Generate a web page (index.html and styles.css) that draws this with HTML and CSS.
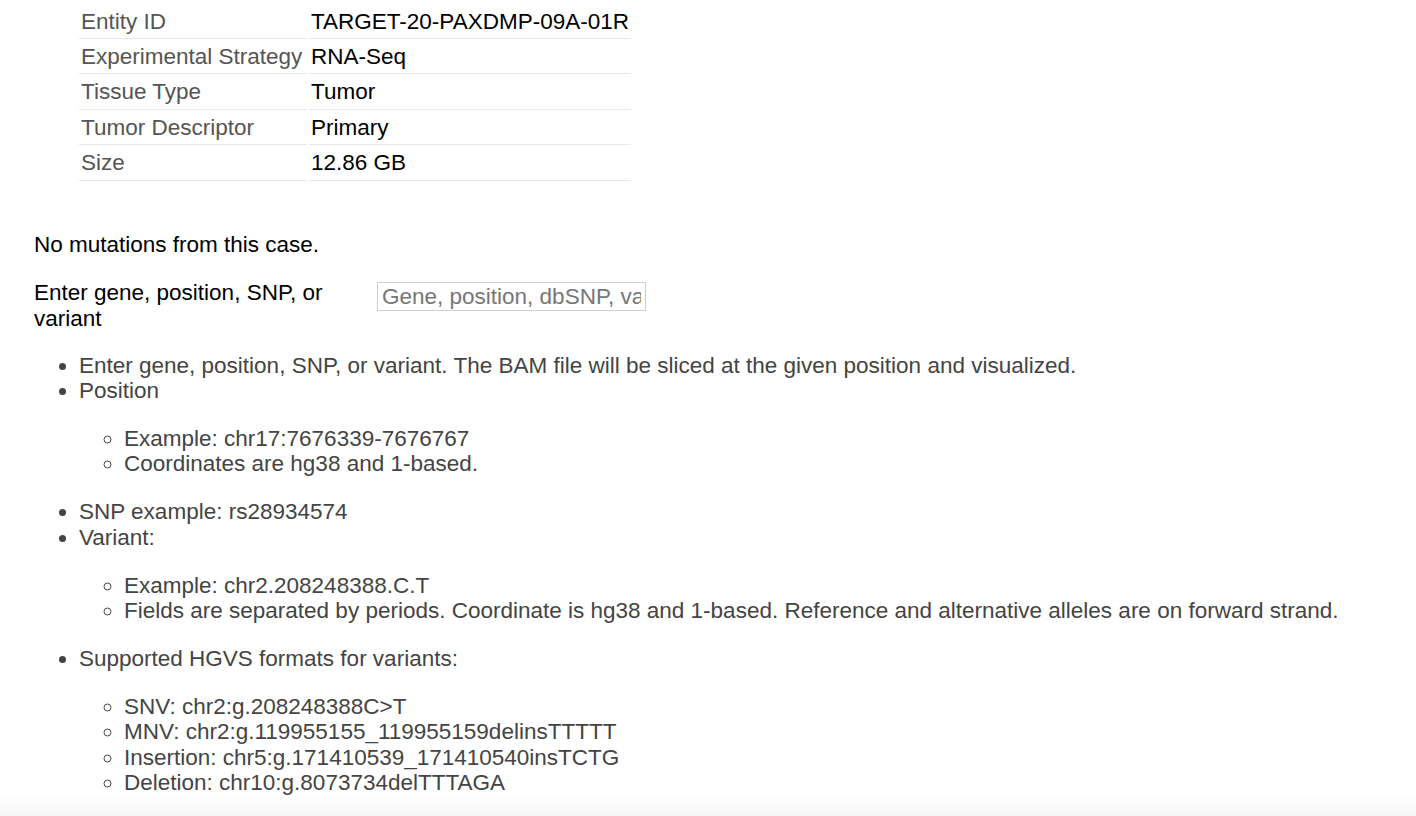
FILE: index.html
```html
<!DOCTYPE html>
<html>
<head>
<meta charset="utf-8">
<link rel="stylesheet" href="styles.css">
</head>
<body>
<div class="page">
  <table class="meta">
    <tr><td class="k">Entity ID</td><td class="v">TARGET-20-PAXDMP-09A-01R</td></tr>
    <tr><td class="k">Experimental Strategy</td><td class="v">RNA-Seq</td></tr>
    <tr><td class="k">Tissue Type</td><td class="v">Tumor</td></tr>
    <tr><td class="k">Tumor Descriptor</td><td class="v">Primary</td></tr>
    <tr><td class="k">Size</td><td class="v">12.86 GB</td></tr>
  </table>

  <p class="none">No mutations from this case.</p>

  <div class="search">
    <label class="search-label" for="q">Enter gene, position, SNP, or variant</label>
    <input id="q" class="search-input" type="text" placeholder="Gene, position, dbSNP, variant">
  </div>

  <ul class="help">
    <li>Enter gene, position, SNP, or variant. The BAM file will be sliced at the given position and visualized.</li>
    <li>Position
      <ul>
        <li>Example: chr17:7676339-7676767</li>
        <li>Coordinates are hg38 and 1-based.</li>
      </ul>
    </li>
    <li>SNP example: rs28934574</li>
    <li>Variant:
      <ul>
        <li>Example: chr2.208248388.C.T</li>
        <li>Fields are separated by periods. Coordinate is hg38 and 1-based. Reference and alternative alleles are on forward strand.</li>
      </ul>
    </li>
    <li>Supported HGVS formats for variants:
      <ul>
        <li>SNV: chr2:g.208248388C&gt;T</li>
        <li>MNV: chr2:g.119955155_119955159delinsTTTTT</li>
        <li>Insertion: chr5:g.171410539_171410540insTCTG</li>
        <li>Deletion: chr10:g.8073734delTTTAGA</li>
      </ul>
    </li>
  </ul>
</div>
<div class="bottom-shade"></div>
</body>
</html>
```

FILE: styles.css
```css
html, body {
  margin: 0;
  padding: 0;
  background: #fff;
}
body {
  font-family: "Liberation Sans", Arial, sans-serif;
  font-size: 22.5px;
  line-height: 25.3px;
  color: #000;
  overflow: hidden;
  height: 816px;
}
.page {
  padding: 0 34px;
}
.meta {
  margin: 3.5px 0 0 43px;
  width: 556px;
  border-collapse: separate;
  border-spacing: 2px 0;
}
.meta td {
  padding: 5px 2px 4.2px 2px;
  border-bottom: 1px solid #e8e8e8;
  vertical-align: top;
  white-space: nowrap;
}
.meta .k {
  width: 226px;
  color: #555;
}
.meta .v {
  color: #000;
}
.none {
  margin: 51px 0 0 0;
}
.search {
  display: flex;
  align-items: flex-start;
  margin-top: 23px;
}
.search-label {
  flex: 0 0 320px;
  margin-right: 23px;
}
.search-input {
  box-sizing: border-box;
  width: 269px;
  height: 29px;
  margin-top: 2px;
  border: 1px solid #cfcfcf;
  padding: 1px 4px 0 4px;
  font-family: "Liberation Sans", Arial, sans-serif;
  font-size: 22.5px;
  color: #333;
  outline: none;
}
.search-input::placeholder {
  color: #777;
}
.help {
  margin: 22px 0 0 0;
  padding-left: 45px;
  color: #444;
}
.help ul {
  margin: 22.7px 0;
  padding-left: 45px;
  list-style-type: circle;
}
.bottom-shade {
  position: fixed;
  left: 0;
  right: 0;
  bottom: 0;
  height: 22px;
  background: linear-gradient(to bottom, rgba(0,0,0,0), rgba(0,0,0,0.035));
}
```
